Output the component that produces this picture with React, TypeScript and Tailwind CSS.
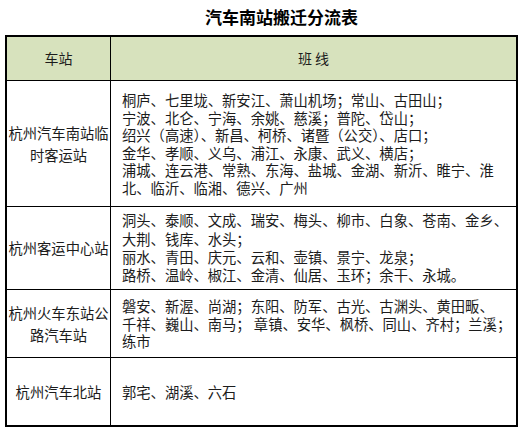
const font = { fontFamily: '"Noto Sans CJK SC", "Noto Sans", sans-serif' }

type Row = {
  station: string[]
  lines: string[]
  height: string
  leading: string
  last?: boolean
}

const ROWS: Row[] = [
  {
    station: ['杭州汽车南站临', '时客运站'],
    lines: [
      '桐庐、七里垅、新安江、萧山机场；常山、古田山；',
      '宁波、北仑、宁海、余姚、慈溪；普陀、岱山；',
      '绍兴（高速）、新昌、柯桥、诸暨（公交）、店口；',
      '金华、孝顺、义乌、浦江、永康、武义、横店；',
      '浦城、连云港、常熟、东海、盐城、金湖、新沂、睢宁、淮',
      '北、临沂、临湘、德兴、广州',
    ],
    height: 'h-[126px]',
    leading: 'leading-[17.5px]',
  },
  {
    station: ['杭州客运中心站'],
    lines: [
      '洞头、泰顺、文成、瑞安、梅头、柳市、白象、苍南、金乡、',
      '大荆、钱库、水头；',
      '丽水、青田、庆元、云和、壶镇、景宁、龙泉；',
      '路桥、温岭、椒江、金清、仙居、玉环；余干、永城。',
    ],
    height: 'h-[83px]',
    leading: 'leading-[18.3px]',
  },
  {
    station: ['杭州火车东站公', '路汽车站'],
    lines: [
      '磐安、新渥、尚湖；东阳、防军、古光、古渊头、黄田畈、',
      '千祥、巍山、南马； 章镇、安华、枫桥、同山、齐村；兰溪；',
      '练市',
    ],
    height: 'h-[68px]',
    leading: 'leading-[17.5px]',
  },
  {
    station: ['杭州汽车北站'],
    lines: ['郭宅、湖溪、六石'],
    height: 'h-[67px]',
    leading: 'leading-[17.5px]',
    last: true,
  },
]

export default function App() {
  return (
    <div className="w-[526px] h-[434px] bg-white text-[#1c1c1c] overflow-hidden" style={font}>
      {/* title */}
      <div className="h-[35px] pt-[7px] pl-[37px] text-center text-[17px] leading-[19px] font-bold text-black">
        汽车南站搬迁分流表
      </div>

      <div className="ml-[5px] w-[513px] border-2 border-black">
        {/* header */}
        <div className="flex h-[44px] bg-[#d7e2bd] border-b border-black text-[14px]">
          <div className="w-[104px] border-r border-black flex items-center justify-center">车站</div>
          <div className="flex-1 flex items-center justify-center whitespace-pre">班 线</div>
        </div>

        {ROWS.map((row) => (
          <div
            key={row.station.join('')}
            className={`flex ${row.height} ${row.last ? '' : 'border-b border-black'}`}
          >
            <div className="w-[104px] border-r border-black flex flex-col items-center justify-center text-[14.3px] leading-[22px] whitespace-nowrap">
              {row.station.map((s) => (
                <div key={s}>{s}</div>
              ))}
            </div>
            <div className={`flex-1 flex flex-col justify-center pl-[11px] text-[14.3px] ${row.leading} whitespace-pre`}>
              {row.lines.map((l) => (
                <div key={l}>{l}</div>
              ))}
            </div>
          </div>
        ))}
      </div>
    </div>
  )
}
